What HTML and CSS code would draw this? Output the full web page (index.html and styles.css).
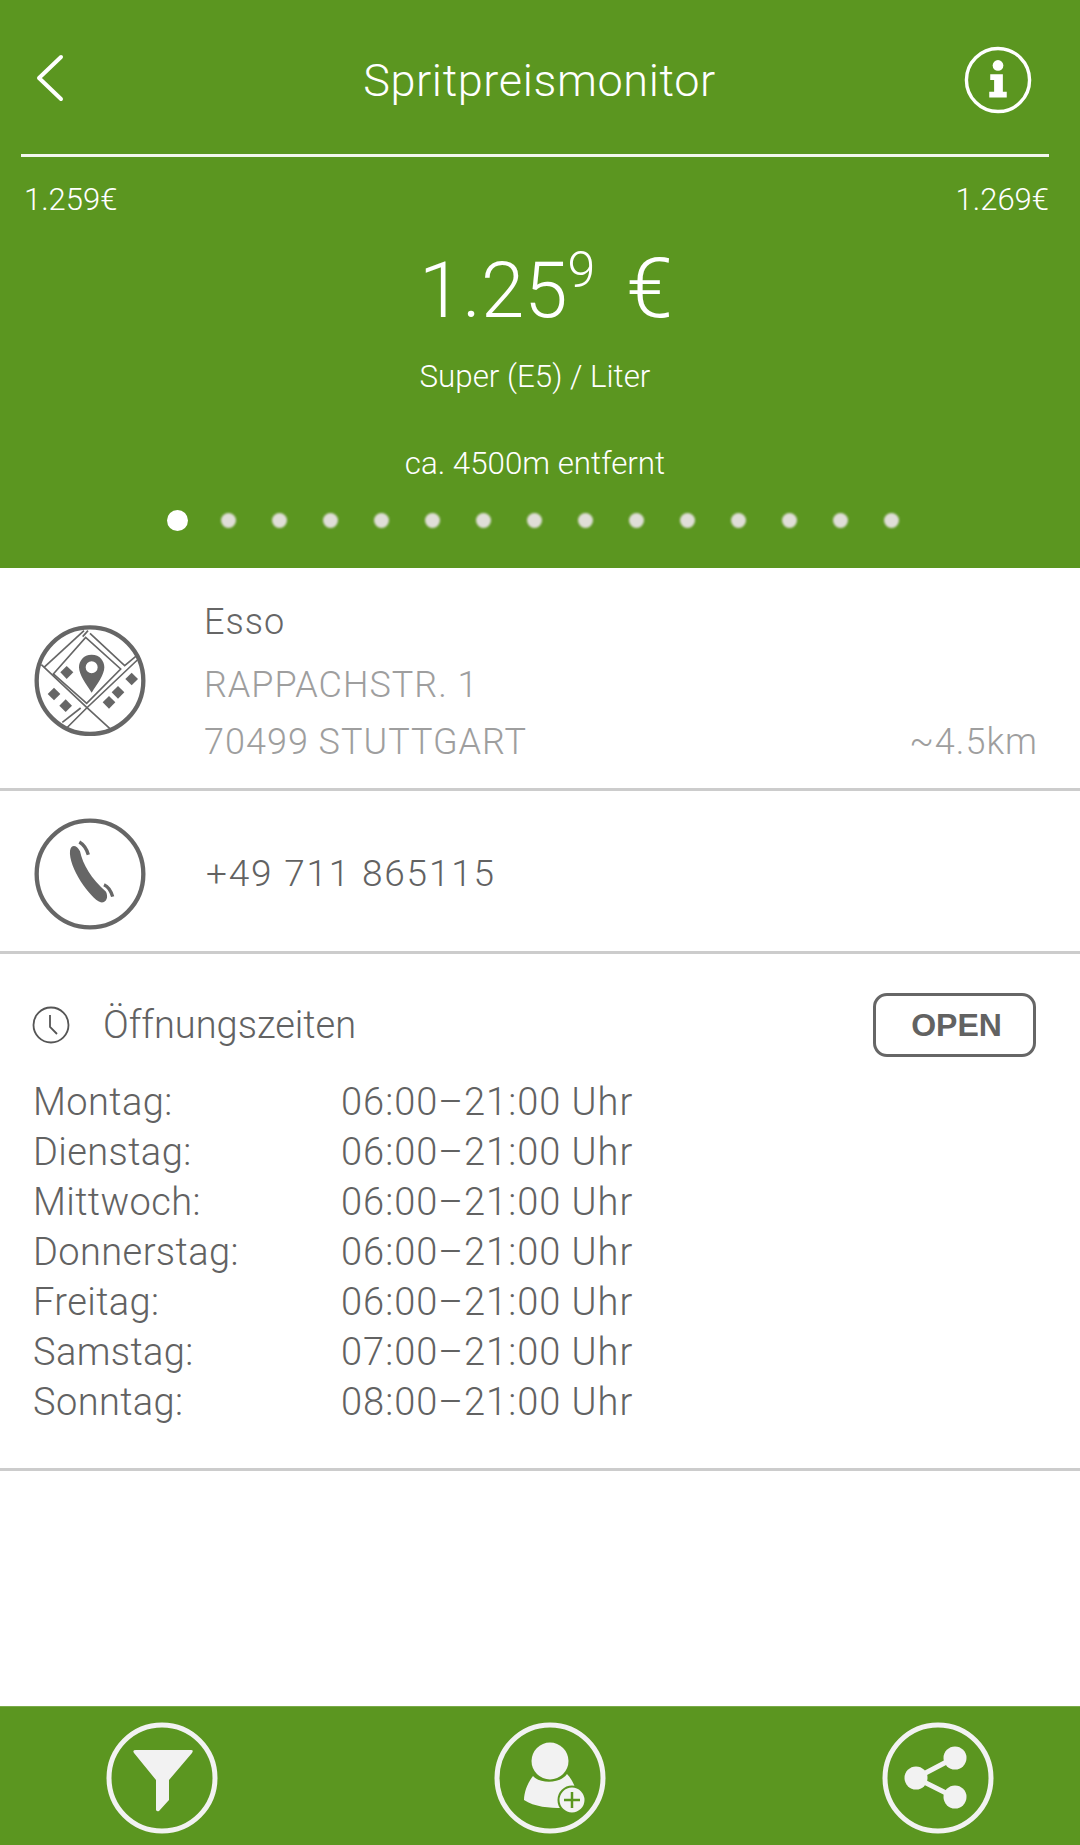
FILE: index.html
```html
<!DOCTYPE html>
<html lang="de">
<head>
<meta charset="utf-8">
<title>Spritpreismonitor</title>
<link rel="stylesheet" href="styles.css">
</head>
<body>
<div class="app">
  <header class="hero">
    <div class="topbar">
      <svg class="back" viewBox="0 0 30 48"><path d="M26 3 L4 24 L26 45" /></svg>
      <h1 class="title">Spritpreismonitor</h1>
      <svg class="info" viewBox="0 0 70 70">
        <circle class="info-ring" cx="35" cy="35" r="32.5"/>
        <circle class="info-mark" cx="35" cy="20" r="5.5"/>
        <path class="info-mark" d="M27 29 H40 V47 H44 V53 H26 V47 H31 V35 H27 Z"/>
      </svg>
    </div>
    <div class="range"><span>1.259€</span><span>1.269€</span></div>
    <div class="price">1.25<sup class="price-sup">9</sup> <span class="euro">€</span></div>
    <div class="fuel">Super (E5) / Liter</div>
    <div class="dist">ca. 4500m entfernt</div>
    <div class="dots">
      <i class="dot active"></i><i class="dot"></i><i class="dot"></i><i class="dot"></i><i class="dot"></i>
      <i class="dot"></i><i class="dot"></i><i class="dot"></i><i class="dot"></i><i class="dot"></i>
      <i class="dot"></i><i class="dot"></i><i class="dot"></i><i class="dot"></i><i class="dot"></i>
    </div>
  </header>

  <section class="row row-address">
    <svg class="row-icon" viewBox="100 70 336 336">
      <defs><clipPath id="mapclip"><circle cx="268" cy="240" r="160"/></clipPath></defs>
      <g class="map-lines" clip-path="url(#mapclip)">
        <path d="M122 192 L258 320 L340 395"/>
        <path d="M130 200 L250 90"/>
        <path d="M158 220 L255 110 L360 205 L258 308 Z"/>
        <path d="M268 98 L372 195 L408 165"/>
        <path d="M410 178 L258 322 L195 385"/>
        <path d="M185 365 L240 322"/>
        <path d="M262 90 L246 108"/>
      </g>
      <g class="gray-fill">
        <path d="M198 196 L218 215 L198 235 L179 215 Z"/>
        <path d="M160 261 L179 280 L160 299 L141 280 Z"/>
        <path d="M195 296 L214 315 L195 334 L176 315 Z"/>
        <path d="M325 286 L344 305 L325 324 L306 305 Z"/>
        <path d="M352 256 L371 275 L352 294 L333 275 Z"/>
        <path d="M393 216 L412 235 L393 254 L374 235 Z"/>
        <path fill-rule="evenodd" d="M273 162 C298 162 311 181 311 200 C311 222 290 250 273 276 C256 250 235 222 235 200 C235 181 248 162 273 162 Z M273 182 A18 18 0 1 0 273 218 A18 18 0 1 0 273 182 Z"/>
      </g>
      <circle class="ring-gray" cx="268" cy="240" r="160"/>
    </svg>
    <div class="address">
      <div class="brand">Esso</div>
      <div class="addr-line">RAPPACHSTR. 1</div>
      <div class="addr-line last-line"><span>70499 STUTTGART</span><span>~4.5km</span></div>
    </div>
  </section>

  <section class="row row-phone">
    <svg class="row-icon" viewBox="100 652 336 336">
      <circle class="ring-gray" cx="268" cy="820" r="160"/>
      <path class="gray-fill" d="M208 750 C212 730 228 733 238 752 C246 790 272 836 316 873 C324 890 317 907 300 905 C268 892 203 800 208 750 Z"/>
      <path class="phone-arc" d="M236 724 Q255 735 263 762"/>
      <path class="phone-arc" d="M310 852 Q328 860 336 888"/>
    </svg>
    <div class="phone">+49 711 865115</div>
  </section>

  <section class="hours">
    <div class="hours-head">
      <svg class="clock" viewBox="0 0 38 38">
        <circle cx="19" cy="19" r="17.5"/>
        <path d="M18 9 V21 L25 28"/>
      </svg>
      <h2 class="hours-title">Öffnungszeiten</h2>
      <div class="badge">OPEN</div>
    </div>
    <dl class="hours-list">
      <dt>Montag:</dt><dd>06:00–21:00 Uhr</dd>
      <dt>Dienstag:</dt><dd>06:00–21:00 Uhr</dd>
      <dt>Mittwoch:</dt><dd>06:00–21:00 Uhr</dd>
      <dt>Donnerstag:</dt><dd>06:00–21:00 Uhr</dd>
      <dt>Freitag:</dt><dd>06:00–21:00 Uhr</dd>
      <dt>Samstag:</dt><dd>07:00–21:00 Uhr</dd>
      <dt>Sonntag:</dt><dd>08:00–21:00 Uhr</dd>
    </dl>
  </section>

  <div class="spacer"></div>

  <footer class="footer">
    <svg class="foot-icon" viewBox="0 0 112 112">
      <circle class="ring-light" cx="56" cy="56" r="53"/>
      <path class="light-fill" d="M28 31 Q26 28 30 28 H85 Q88 28 86 31 L63 58 V78 L53 89 Q51 90 50 88 V58 Z"/>
    </svg>
    <svg class="foot-icon" viewBox="0 0 112 112">
      <circle class="ring-light" cx="56" cy="56" r="53"/>
      <circle class="light-fill" cx="56" cy="39" r="18.5"/>
      <path class="light-fill" d="M39 54 C46 62 66 62 73 52 C77 56 80 62 82 68 L68 86 C56 86 40 85 30 78 C30 70 34 60 39 54 Z"/>
      <circle class="badge-ring" cx="78" cy="78" r="13.5"/>
      <path class="badge-plus" d="M78 70 V86 M70 78 H86"/>
    </svg>
    <svg class="foot-icon" viewBox="0 0 112 112">
      <circle class="ring-light" cx="56" cy="56" r="53"/>
      <path class="share-line" d="M72 36 L34 56 L72 75"/>
      <circle class="light-fill" cx="34" cy="56" r="11.5"/>
      <circle class="light-fill" cx="73" cy="36" r="11.5"/>
      <circle class="light-fill" cx="73" cy="75" r="11.5"/>
    </svg>
  </footer>
</div>
</body>
</html>
```

FILE: styles.css
```css
* { box-sizing: border-box; }
html, body { margin: 0; padding: 0; background: #fff; }
body { font-family: Roboto, "Liberation Sans", sans-serif; font-weight: 300; color: #626262; }
.app { width: 1080px; height: 1845px; display: flex; flex-direction: column; }

.hero { height: 568px; background: #5b9620; color: #fff; display: flex; flex-direction: column; align-items: center; }
.topbar { width: 1028px; height: 157px; margin-right: 10px; border-bottom: 3px solid #f4f7ef; display: grid; grid-template-columns: 1fr auto 1fr; align-items: center; padding: 0 17px 0 14px; }
.back { width: 30px; height: 48px; margin-top: 2px; fill: none; stroke: #fff; stroke-width: 4; stroke-linecap: round; stroke-linejoin: round; }
.title { margin: 0 0 0 12px; font-size: 45px; font-weight: 300; letter-spacing: .65px; line-height: 1; padding-top: 6px; }
.info { width: 68px; height: 68px; justify-self: end; margin-top: 6px; }
.info-ring { fill: none; stroke: #fff; stroke-width: 3.5; }
.info-mark { fill: #fff; }

.range { width: 1028px; margin-right: 10px; display: flex; justify-content: space-between; font-size: 31px; font-weight: 300; line-height: 32px; padding: 0 0 0 3px; margin-top: 27px; }
.price { font-size: 78px; font-weight: 300; line-height: 90px; margin-top: 28px; margin-left: 12px; white-space: pre; }
.price-sup { font-size: 50px; line-height: 0; vertical-align: 30px; }
.euro { margin-left: 12px; font-size: 84px; }
.fuel { font-size: 31.3px; font-weight: 300; line-height: 36px; margin-top: 23px; margin-right: 10px; }
.dist { font-size: 31.3px; font-weight: 300; line-height: 36px; margin-top: 51px; margin-right: 10px; }
.dots { display: flex; align-items: center; gap: 36px; margin-top: 27px; margin-right: 11px; height: 22px; }
.dot { width: 15px; height: 15px; border-radius: 50%; background: #e0ded8; filter: blur(1.2px); }
.dot.active { width: 21px; height: 21px; background: #fff; margin-right: -3px; margin-left: -3px; filter: blur(.5px); }

.row { display: flex; border-bottom: 3px solid #ccc; padding-left: 34px; }
.row-icon { width: 112px; height: 112px; flex: none; }
.row-address { height: 223px; align-items: flex-start; padding-top: 56px; }
.map-lines path { fill: none; stroke: #666; stroke-width: 5; }
.gray-fill { fill: #666; }
.ring-gray { fill: none; stroke: #666; stroke-width: 13; }
.phone-arc { fill: none; stroke: #666; stroke-width: 10; }

.address { flex: 1; margin-left: 58px; margin-top: -56px; padding: 34px 42px 0 0; }
.brand { font-size: 36px; letter-spacing: 1px; line-height: 40px; color: #666; }
.addr-line { font-size: 36px; letter-spacing: 1px; line-height: 56px; color: #9e9e9e; margin-top: 15px; }
.last-line { display: flex; justify-content: space-between; margin-top: 1px; }

.row-phone { height: 163px; padding-top: 5px; align-items: center; }
.phone { font-size: 37px; margin-left: 60px; letter-spacing: 1.8px; }

.hours { height: 517px; padding: 39px 44px 0 33px; border-bottom: 3px solid #ccc; }
.hours-head { display: flex; align-items: center; height: 64px; }
.clock { width: 38px; height: 38px; fill: none; stroke: #555; stroke-width: 1.8; margin-right: 33px; margin-left: -1px; }
.hours-title { margin: 0; font-size: 38px; font-weight: 300; flex: 1; }
.badge { width: 163px; height: 64px; border: 3px solid #666; border-radius: 14px; padding-left: 4px; font: bold 32px/58px "Liberation Sans", sans-serif; text-align: center; }
.hours-list { margin: 20px 0 0; display: grid; grid-template-columns: 308px 1fr; grid-auto-rows: 50px; font-size: 38px; line-height: 50px; }
.hours-list dt, .hours-list dd { margin: 0; }
.hours-list dt { letter-spacing: .4px; }
.hours-list dd { letter-spacing: 1px; }

.spacer { flex: 1; }
.footer { height: 139px; background: #5b9620; border-top: 1px solid #7aab4a; display: flex; justify-content: center; gap: 276px; padding: 15px 0 0 19px; }
.foot-icon { width: 112px; height: 112px; }
.ring-light { fill: none; stroke: #f2f2f2; stroke-width: 5; }
.light-fill { fill: #f2f2f2; }
.badge-ring { fill: #f2f2f2; stroke: #5b9620; stroke-width: 2; }
.badge-plus { fill: none; stroke: #5b9620; stroke-width: 2.5; }
.share-line { fill: none; stroke: #f2f2f2; stroke-width: 5; }
```
